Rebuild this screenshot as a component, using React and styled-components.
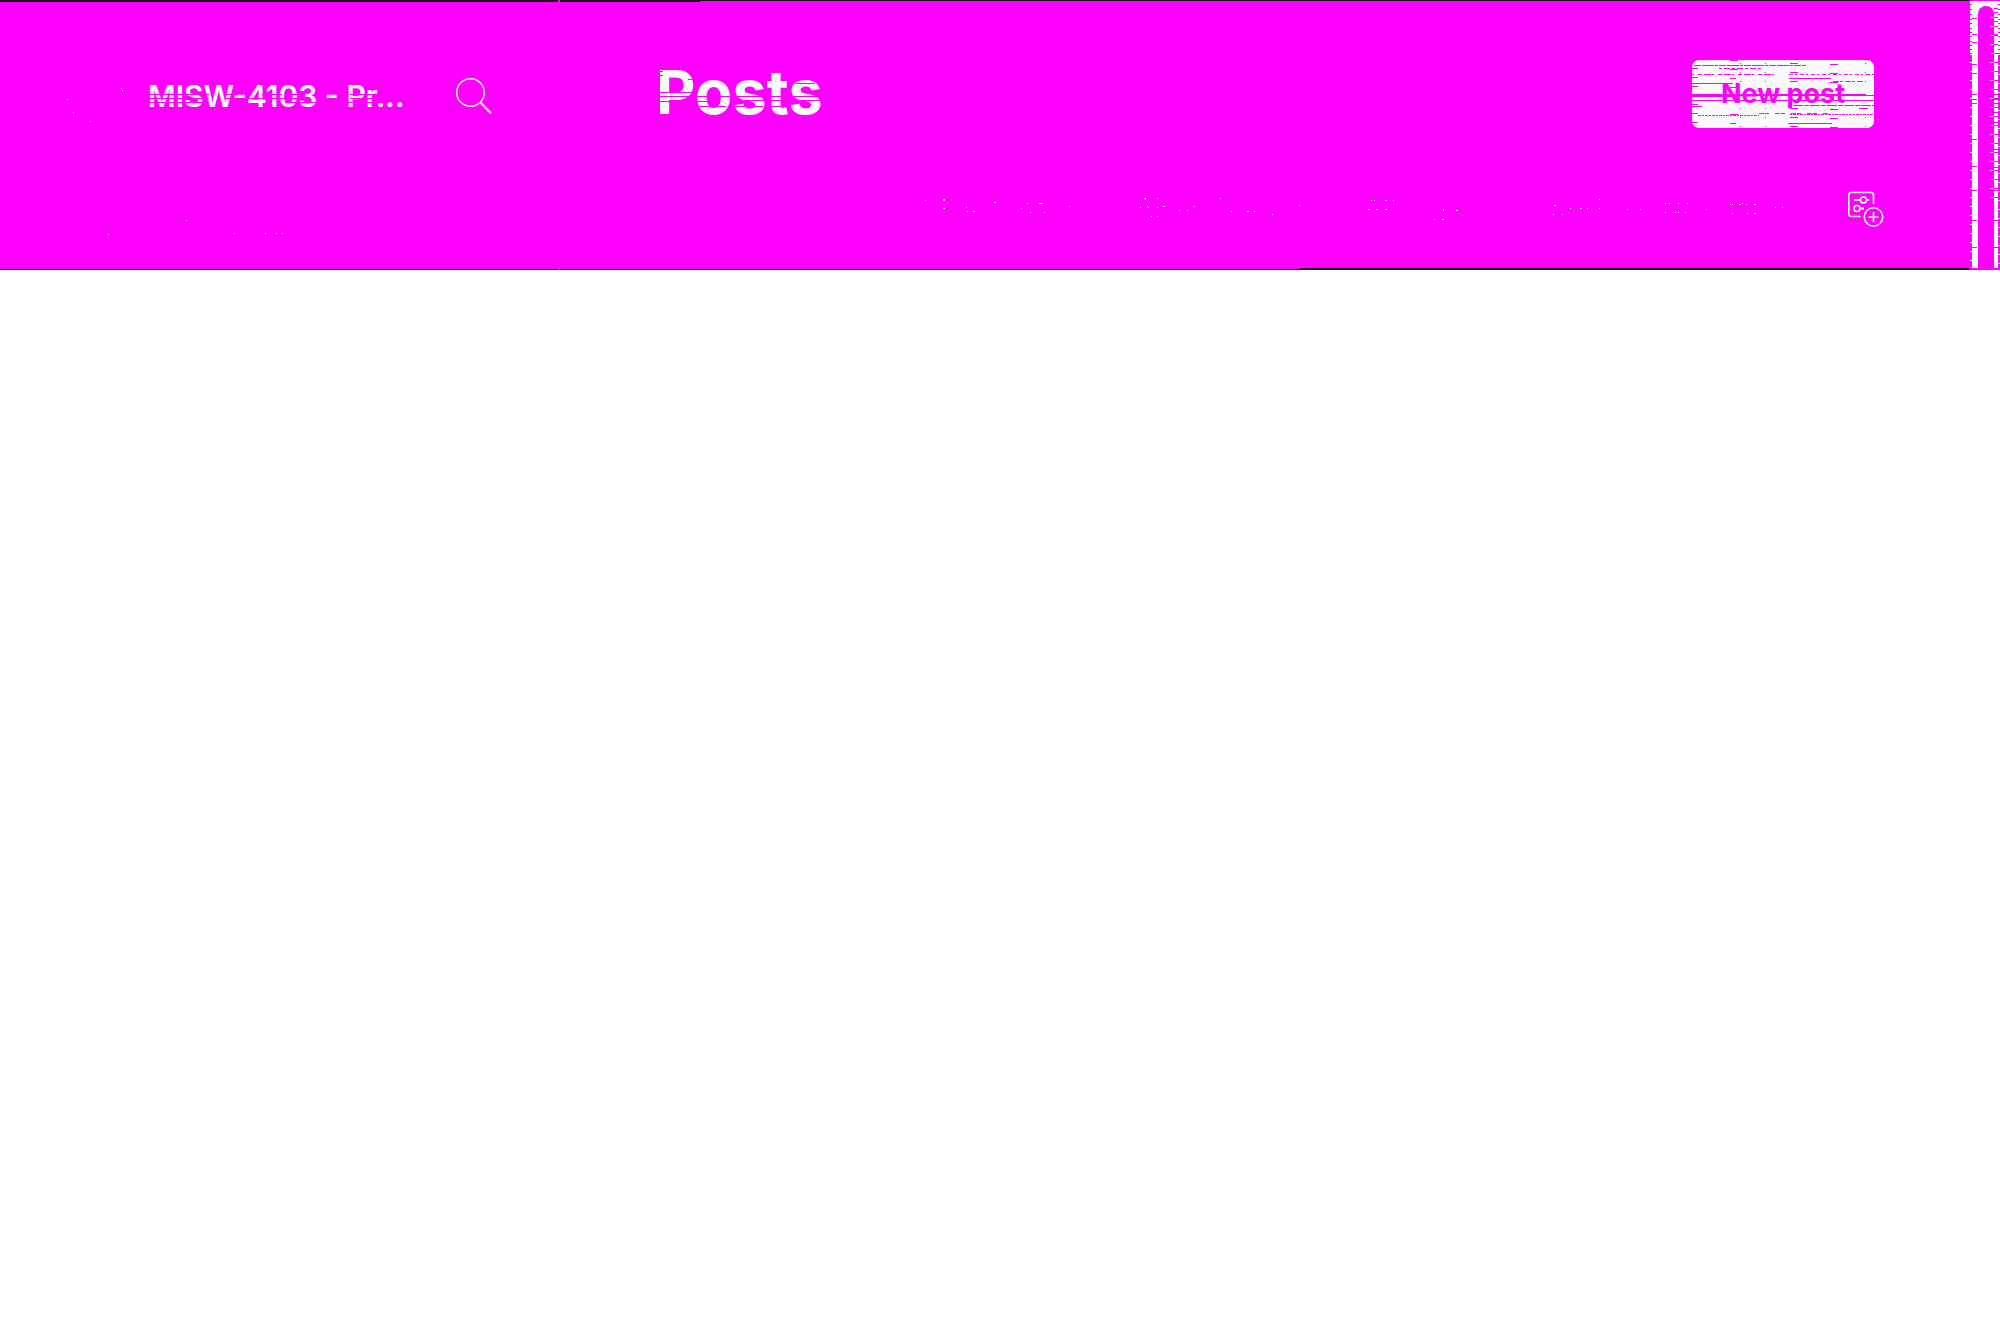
import React from "react";
import styled, { createGlobalStyle } from "styled-components";

const MAGENTA = "#ff00ff";
const LIGHT = "#fafafa";
const DARK = "#15171a";

const GlobalStyle = createGlobalStyle`
  * { box-sizing: border-box; }
  html, body { margin: 0; background: #ffffff; }
  body { font-family: Inter, "Liberation Sans", sans-serif; }
`;

const Header = styled.div`
  position: relative;
  display: flex;
  height: 270px;
  background: ${MAGENTA};
  overflow: hidden;
`;

const Sidebar = styled.aside`
  display: flex;
  align-items: flex-start;
  justify-content: space-between;
  flex: 0 0 560px;
  padding: 78px 68px 0 148px;
`;

const SiteName = styled.span`
  font-size: 30px;
  line-height: 36px;
  font-weight: 600;
  color: ${LIGHT};
  white-space: nowrap;
`;

const IconButton = styled.button`
  display: block;
  padding: 0;
  border: 0;
  background: none;
  color: ${LIGHT};
  line-height: 0;
  cursor: pointer;
`;

const Main = styled.main`
  display: flex;
  flex-direction: column;
  flex: 1;
  min-width: 0;
  padding: 56px 96px 0 96px;
`;

const TitleRow = styled.div`
  display: flex;
  align-items: center;
  justify-content: space-between;
  height: 76px;
`;

const Title = styled.h1`
  margin: 0;
  padding-bottom: 4px;
  font-size: 61px;
  line-height: 72px;
  font-weight: 700;
  color: ${LIGHT};
`;

const PostButton = styled.button`
  width: 182px;
  height: 68px;
  padding: 0;
  border: 0;
  border-radius: 7px;
  background: ${LIGHT};
  color: ${MAGENTA};
  font: 700 27px/36px Inter, "Liberation Sans", sans-serif;
  cursor: pointer;
`;

const FilterRow = styled.div`
  display: flex;
  justify-content: flex-end;
  padding-top: 58px;
  margin-right: -11px;
`;

const Scrollbar = styled.div`
  flex: 0 0 30px;
  margin: 1px 0 2px;
  padding: 5px 6px 0 8px;
  background: ${LIGHT};
`;

const Thumb = styled.div`
  height: 100%;
  border-radius: 8px 8px 0 0;
  background: ${MAGENTA};
`;

const Overlay = styled.svg`
  position: absolute;
  inset: 0;
  width: 2000px;
  height: 270px;
  pointer-events: none;
`;

/* x, y, width of one-pixel-high streaks */
const titleStreaks = [
  [660, 92, 32], [660, 96, 160], [735, 100, 86], [660, 101, 50], [700, 106, 26],
  [735, 106, 28], [770, 106, 12], [795, 83, 20], [688, 79, 6], [660, 71, 3], [660, 75, 3],
  [149, 94, 60], [225, 94, 12], [262, 94, 20], [285, 94, 20], [350, 94, 40],
  [149, 98, 60], [225, 98, 80], [350, 98, 40], [149, 102, 60], [285, 102, 100],
];
const buttonStreaks = [
  [1692, 83, 41], [1692, 94, 174], [1692, 95, 182], [1692, 96, 14], [1706, 96, 30], [1692, 100, 182],
  [1789, 78, 42], [1788, 123, 44], [1730, 60, 8], [1730, 69, 8], [1730, 78, 6], [1730, 87, 6],
  [1730, 114, 8], [1730, 123, 6], [1790, 63, 8], [1790, 72, 8], [1790, 81, 8],
  [1790, 108, 8], [1790, 117, 8], [1790, 126, 8], [1830, 64, 8], [1830, 73, 8], [1830, 82, 8],
  [1830, 109, 8], [1830, 118, 8], [1830, 127, 8], [1859, 108, 9],
  [1692, 68, 6], [1692, 77, 6], [1692, 86, 6], [1692, 104, 6], [1692, 106, 10],
  [1692, 113, 6], [1692, 122, 6],
];
const dashedStreaks = [
  [1694, 65, 112, "7 1 12 1 3 1"], [1719, 68, 43, "3 2 6 2"], [1692, 74, 84, "2 4 4 2 7 1"],
  [1789, 74, 85, "4 2 2 3"], [1833, 81, 30, "6 1 3 2"], [1793, 105, 81, "10 1 5 1"],
  [1759, 113, 70, "5 1 4 6"], [1698, 115, 61, "3 1 2 1"], [1790, 114, 84, "2 1 3 1"],
];
const specks = [
  [121, 88], [122, 90], [67, 99], [73, 112], [90, 121], [186, 220], [108, 234], [234, 233],
  [265, 233], [276, 233], [282, 233],
  [925, 200], [943, 199, 2, 2], [943, 208, 2], [966, 207], [967, 211], [973, 211, 2],
  [994, 202, 2], [1021, 208], [1027, 203], [1039, 203, 4], [1030, 212], [1044, 212], [1069, 206],
  [1140, 207], [1144, 198, 2], [1145, 199], [1147, 206], [1148, 207], [1151, 216],
  [1157, 198], [1157, 207], [1157, 216], [1163, 206, 2], [1179, 210], [1187, 210], [1194, 206],
  [1220, 198], [1231, 211], [1247, 211, 2], [1254, 211], [1272, 214], [1299, 205],
  [1368, 209, 2], [1371, 200], [1374, 200], [1376, 209, 2], [1385, 200, 2], [1385, 209, 2], [1393, 200],
  [1434, 219], [1442, 219, 2], [1443, 209, 1, 2], [1456, 210, 2], [1553, 214], [1554, 205, 2],
  [1562, 214], [1570, 208], [1580, 208, 2], [1587, 208], [1599, 199], [1599, 208], [1627, 209],
  [1640, 209], [1665, 203], [1669, 203], [1678, 203], [1687, 203], [1665, 212], [1675, 212],
  [1678, 212], [1685, 212], [1706, 209], [1730, 204], [1732, 204], [1739, 204, 2], [1742, 203],
  [1746, 204], [1754, 204, 2], [1732, 213], [1747, 213], [1754, 213, 2], [1775, 207], [1782, 207],
];
const edgeRows = Array.from({ length: 28 }, (_, i) => 17 + i * 9);
const topDashes = [4, 9, 14, 19, 23, 28, 32, 36, 41, 45, 49, 53];

function Texture() {
  return (
    <Overlay aria-hidden="true" shapeRendering="crispEdges">
      <g fill={DARK}>
        <rect width="700" height="2" />
        <rect x="700" width="1270" height="1" />
        <rect y="269" width="1300" height="1" />
        <rect x="1300" y="268" width="670" height="2" />
      </g>
      <g fill={MAGENTA}>
        <rect x="558" width="2" height="2" />
        <rect x="558" y="269" width="2" height="1" />
        {[...titleStreaks, ...buttonStreaks].map(([x, y, w], i) => (
          <rect key={i} x={x} y={y} width={w} height="1" />
        ))}
        {[1740, 1765, 1865].map((x) =>
          [63, 72, 81, 108, 117, 126].map((y) => <rect key={x + "-" + y} x={x} y={y} width="1" height="1" />)
        )}
        <rect x="1970" y="55" width="2" height="213" />
        <rect x="1998" y="55" width="2" height="213" />
        {[18, 34, 42, 64, 73, 94, 99, 103, 139, 166, 190, 220, 247].map((y) => (
          <rect key={y} x="1972" y={y} width="5" height="1" />
        ))}
        {[8, 12, 21, 34, 94, 99, 103, 112, 122, 149, 167, 190, 220, 247].map((y) => (
          <rect key={y} x="1994" y={y} width="4" height="1" />
        ))}
        {topDashes.map((y) => (
          <g key={y}>
            <rect x="1970" y={y} width="2" height="1" />
            <rect x="1998" y={y} width="2" height="1" />
          </g>
        ))}
      </g>
      {dashedStreaks.map(([x, y, w, dash], i) => (
        <path key={i} d={`M${x} ${y + 0.5}h${w}`} stroke={MAGENTA} strokeDasharray={dash} />
      ))}
      <g fill="#fff0ff">
        {specks.map(([x, y, w = 1, h = 1], i) => (
          <rect key={i} x={x} y={y} width={w} height={h} />
        ))}
      </g>
      {edgeRows.map((y) => (
        <g key={y} fill={LIGHT}>
          {y > 55 && <rect x="1970" y={y} width="2" height="1" />}
          {y < 200 && <rect x="1990" y={y} width="4" height="1" fill="#c8a8c8" />}
          {y < 200 && <rect x="1994" y={y} width="4" height="1" fill={MAGENTA} />}
          {y > 55 && <rect x="1998" y={y + 3} width="2" height="1" />}
        </g>
      ))}
    </Overlay>
  );
}

export default function App() {
  return (
    <>
      <GlobalStyle />
      <Header>
        <Sidebar>
          <SiteName>MISW-4103 - Pr...</SiteName>
          <IconButton aria-label="Search">
            <svg width="36" height="36" viewBox="0 0 36 36" fill="none" stroke="currentColor" strokeWidth="1.5">
              <circle cx="14.5" cy="14.5" r="13.8" />
              <path d="M24.5 24.5L35 35.5" strokeWidth="2" />
            </svg>
          </IconButton>
        </Sidebar>
        <Main>
          <TitleRow>
            <Title>Posts</Title>
            <PostButton>New post</PostButton>
          </TitleRow>
          <FilterRow>
            <IconButton aria-label="Save view">
              <svg width="37" height="37" viewBox="0 0 37 37" fill="none" stroke="currentColor" strokeWidth="1.6">
                <path d="M12.5 26.5H3A2.5 2.5 0 0 1 .8 24V5A2.5 2.5 0 0 1 3 2.5H23A2.5 2.5 0 0 1 25.5 5v9" />
                <circle cx="15.5" cy="10" r="3" />
                <path d="M6 10h6M18.5 10h2.5M11.5 18.5h4.5" strokeWidth="2" />
                <circle cx="9" cy="18.5" r="3" />
                <circle cx="25.5" cy="27" r="9.2" />
                <path d="M25.5 22v10M20.5 27h10" />
              </svg>
            </IconButton>
          </FilterRow>
        </Main>
        <Scrollbar>
          <Thumb />
        </Scrollbar>
        <Texture />
      </Header>
    </>
  );
}
